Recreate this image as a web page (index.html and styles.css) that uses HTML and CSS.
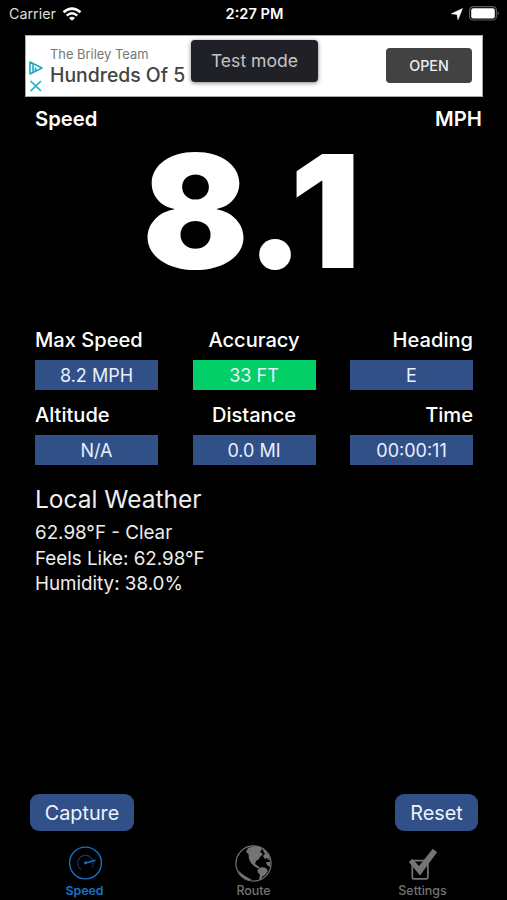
FILE: index.html
```html
<!DOCTYPE html>
<html lang="en">

<head>
    <meta charset="UTF-8">
    <meta name="viewport" content="width=device-width, initial-scale=1.0">
    <link rel="stylesheet" href="styles.css">
    <title>Speedometer</title>
</head>

<body>
    <div class="status">
        <div class="carrier">
            <span>Carrier</span>
            <svg width="20" height="14" viewBox="0 0 20 14">
                <path d="M1.5 5.2 Q10 -2 18.5 5.2" fill="none" stroke="#fff" stroke-width="2.5" />
                <path d="M4.7 8.6 Q10 4.1 15.3 8.6" fill="none" stroke="#fff" stroke-width="2.4" />
                <path d="M7 11 Q10 8.4 13 11 L10 13.8Z" fill="#fff" />
            </svg>
        </div>
        <span class="clock">2:27 PM</span>
        <div class="battery">
            <svg width="12" height="12" viewBox="0 0 12 12">
                <path d="M11.5 .5 L7 11.8 L6 6.4 L.3 5.8Z" fill="#fff" stroke="#fff" stroke-width=".5" />
            </svg>
            <svg width="31" height="15" viewBox="0 0 31 15">
                <rect x=".6" y=".6" width="26.8" height="13.4" rx="3.6" fill="none" stroke="#5c5c5c" stroke-width="1.2" />
                <rect x="2.2" y="2.2" width="23.6" height="10.2" rx="2" fill="#fff" />
                <path d="M28.6 5 Q31.4 7.3 28.6 9.6Z" fill="#5c5c5c" />
            </svg>
        </div>
    </div>

    <div class="ad">
        <svg class="ad-icons" width="15" height="34" viewBox="0 0 15 34">
            <path d="M1 2 L13 8 L1 14Z M4 4.5 V11.5 M6.5 7.5 V10.5" fill="none" stroke="#19a9c4" stroke-width="1.6" stroke-linejoin="round" />
            <path d="M1.5 21 L12 31 M12 21 L1.5 31" stroke="#19a9c4" stroke-width="1.6" />
        </svg>
        <div class="ad-text">
            <p class="advertiser">The Briley Team</p>
            <p class="headline">Hundreds Of 5</p>
        </div>
        <button class="open">OPEN</button>
        <div class="toast">Test mode</div>
    </div>

    <div class="title">
        <span>Speed</span>
        <span>MPH</span>
    </div>
    <div class="speed">8.1</div>

    <div class="stats">
        <div class="stat">
            <p class="label">Max Speed</p>
            <div class="value">8.2 MPH</div>
        </div>
        <div class="stat center">
            <p class="label">Accuracy</p>
            <div class="value green">33 FT</div>
        </div>
        <div class="stat right">
            <p class="label">Heading</p>
            <div class="value">E</div>
        </div>
        <div class="stat">
            <p class="label">Altitude</p>
            <div class="value">N/A</div>
        </div>
        <div class="stat center">
            <p class="label">Distance</p>
            <div class="value">0.0 MI</div>
        </div>
        <div class="stat right">
            <p class="label">Time</p>
            <div class="value">00:00:11</div>
        </div>
    </div>

    <div class="weather">
        <h2>Local Weather</h2>
        <p>62.98°F - Clear</p>
        <p>Feels Like: 62.98°F</p>
        <p>Humidity: 38.0%</p>
    </div>

    <div class="buttons">
        <button class="btn capture">Capture</button>
        <button class="btn reset">Reset</button>
    </div>

    <div class="tabs">
        <div class="tab active">
            <svg width="38" height="38" viewBox="0 0 38 38" fill="none" stroke="currentColor">
                <circle cx="19.5" cy="19" r="15.9" stroke-width="1.4" />
                <path d="M15 25.5 A7.8 7.8 0 1 1 26 23.4" stroke-width="1.2" opacity=".5" />
                <path d="M19.5 19 L29.5 16.3" stroke-width="1.4" />
                <circle cx="19.5" cy="19" r="1.4" fill="currentColor" stroke="none" />
            </svg>
            <span>Speed</span>
        </div>
        <div class="tab">
            <svg width="38" height="38" viewBox="0 0 38 38" fill="currentColor">
                <circle cx="18.5" cy="19.5" r="17.6" fill="none" stroke="currentColor" stroke-width="1.2" />
                <path d="M13 4 L19 2 L25 3 L27 5 L25 8 L28 10 L25 13 L24 15 L21 17 L20 20 L23 22 L25 24 L23 24.5 L19 22 L16 19 L14 15 L13.5 10 L11 8Z" />
                <path d="M23 25 L27 23 L31 24 L33 27 L30 31 L27 33 L26 36 L24 35 L25 31 L22.5 28Z" />
                <path d="M27 4.5 L31 7.5 L34 12 L35 17 L32 14 L30 15 L28 12 L30 10Z M31 18 L35.5 18 L35 23 L32 21Z" />
                <path d="M3 26 L6 29 L10 32 L17 36 L12 36 L6 32Z" />
            </svg>
            <span>Route</span>
        </div>
        <div class="tab">
            <svg width="38" height="38" viewBox="0 0 38 38" fill="currentColor">
                <path d="M21 16.6 H10 Q8.3 16.6 8.3 18 V33 Q8.3 34.8 9.9 34.8 H22.1 Q23.9 34.8 23.9 33 V20" fill="none" stroke="currentColor" stroke-width="1.7" />
                <path d="M4.8 18 L8.5 14.7 L15 22 L28.8 4.7 L33.1 8.3 L16 31.5Z" />
            </svg>
            <span>Settings</span>
        </div>
    </div>
</body>

</html>
```
FILE: styles.css
```css
* {
    box-sizing: border-box;
}

body {
    margin: 0;
    width: 507px;
    height: 900px;
    display: flex;
    flex-direction: column;
    overflow: hidden;
    background-color: #000;
    color: #fff;
    font-family: Inter, "Liberation Sans", sans-serif;
    white-space: nowrap;
}

p, h2 {
    margin: 0;
}

button {
    border: none;
    padding: 0;
    font-family: inherit;
}

.status {
    height: 35px;
    padding: 0 7px 8px 9px;
    display: grid;
    grid-template-columns: 1fr auto 1fr;
    align-items: center;
    font-size: 14.3px;
}

.carrier, .battery {
    display: flex;
    align-items: center;
    gap: 6px;
    color: #ddd;
}

.battery {
    justify-content: flex-end;
}

.clock {
    font-weight: 600;
    font-size: 14.6px;
}

.ad {
    position: relative;
    width: 458px;
    height: 62px;
    margin-left: 25px;
    padding: 0 10px 2px 3px;
    display: flex;
    align-items: center;
    background-color: #fff;
    border: 1px solid #aaa;
}

.ad-icons {
    margin-top: 23px;
}

.ad-text {
    flex: 1;
    margin-left: 6px;
    padding-top: 3px;
}

.advertiser {
    color: #777;
    font-size: 12.9px;
    line-height: 17px;
}

.headline {
    color: #444;
    font-size: 19.4px;
    font-weight: 500;
    line-height: 25px;
}

.open {
    width: 86px;
    height: 35px;
    border-radius: 4px;
    background-color: #424242;
    color: #eee;
    font-size: 14.3px;
    font-weight: 500;
}

.toast {
    position: absolute;
    left: 165px;
    top: 4px;
    width: 127px;
    height: 42px;
    line-height: 42px;
    text-align: center;
    border-radius: 4px;
    background-color: #202126;
    color: #c4c4c8;
    font-size: 17.6px;
    box-shadow: 0 1px 4px rgba(0, 0, 0, 0.5);
}

.title {
    height: 43px;
    padding: 0 25px 0 35px;
    display: flex;
    justify-content: space-between;
    align-items: center;
    font-size: 20.3px;
    font-weight: 560;
}

.speed {
    height: 140px;
    line-height: 142px;
    padding-right: 4px;
    text-align: center;
    font-size: 157px;
    font-weight: 900;
}

.stats {
    margin-top: 45px;
    padding: 0 34px 0 35px;
    display: grid;
    grid-template-columns: repeat(3, 123px);
    justify-content: space-between;
}

.stat {
    height: 75px;
}

.center {
    text-align: center;
}

.right {
    text-align: right;
}

.label {
    height: 35px;
    line-height: 31px;
    font-size: 20.1px;
    font-weight: 550;
}

.value {
    height: 30px;
    line-height: 31px;
    background-color: #315087;
    color: #e9efff;
    font-size: 18px;
    text-align: center;
}

.green {
    background-color: #02cf67;
}

.weather {
    margin-top: 6px;
    padding-left: 35px;
    color: #eee;
    font-size: 18.8px;
    line-height: 25.6px;
}

.weather h2 {
    margin-bottom: 3px;
    font-size: 24.5px;
    font-weight: 400;
    line-height: 36px;
}

.buttons {
    margin-top: auto;
    padding: 0 29px 0 30px;
    display: flex;
    justify-content: space-between;
}

.btn {
    height: 37px;
    border-radius: 9px;
    background-color: #315087;
    color: #eef3ff;
    font-size: 19.8px;
}

.capture {
    width: 104px;
}

.reset {
    width: 83px;
}

.tabs {
    height: 69px;
    padding-top: 13px;
    display: grid;
    grid-template-columns: repeat(3, 1fr);
}

.tab {
    display: flex;
    flex-direction: column;
    align-items: center;
    color: #747474;
    font-size: 12.4px;
    font-weight: 500;
    line-height: 18px;
}

.active {
    color: #1672c9;
    font-weight: 600;
}
```
